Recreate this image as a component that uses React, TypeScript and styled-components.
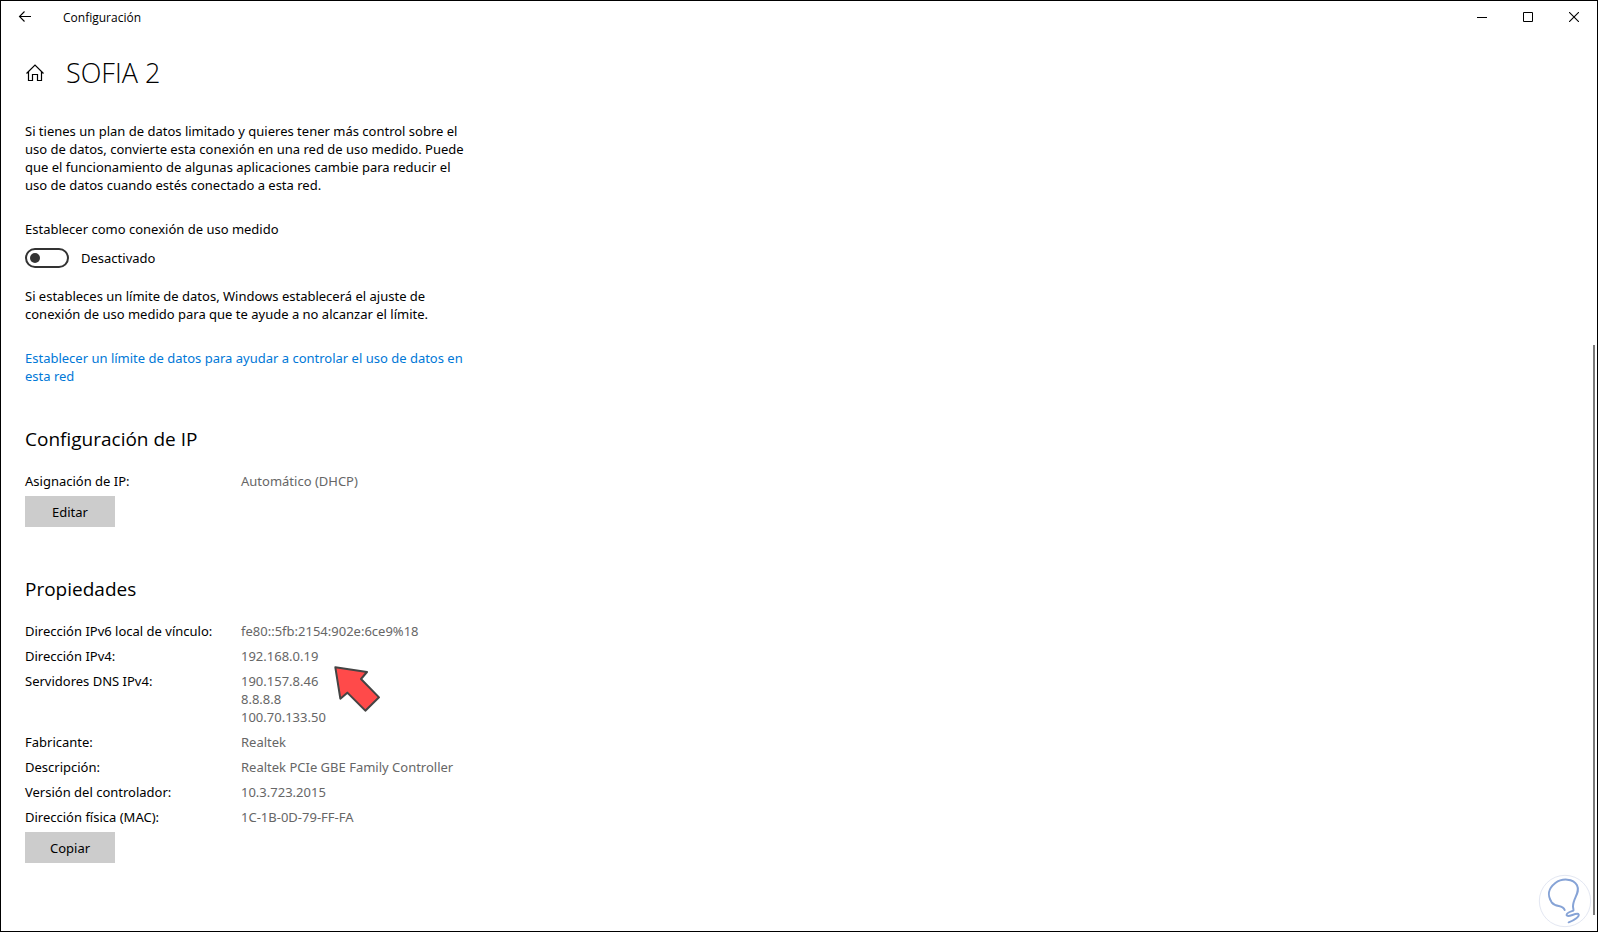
import React from 'react';
import styled, { createGlobalStyle } from 'styled-components';

const GlobalStyle = createGlobalStyle`
  * { box-sizing: border-box; }
  body {
    margin: 0;
    background: #fff;
    color: #000;
    font: 13px/18px "Segoe UI", "Noto Sans", "Open Sans", sans-serif;
  }
`;

const headingFont = '"Segoe UI", "Open Sans", "Noto Sans", sans-serif';

const Window = styled.div`
  position: relative;
  min-height: 100vh;
  border: 1px solid #000;
  background: #fff;
`;

const TitleBar = styled.header`
  display: flex;
  align-items: center;
  height: 32px;
  padding-left: 1px;
`;

const CaptionButton = styled.button`
  display: flex;
  align-items: center;
  justify-content: center;
  width: 46px;
  height: 32px;
  padding: 0;
  border: 0;
  background: transparent;
  color: #000;
`;

const AppName = styled.span`
  flex: 1;
  padding: 2px 0 0 15px;
  font-family: ${headingFont};
  font-size: 12px;
`;

const PageHeader = styled.div`
  display: flex;
  align-items: center;
  gap: 21px;
  height: 80px;
  padding-left: 24px;
`;

const HomeLink = styled.a`
  display: flex;
  color: #000;
`;

const PageTitle = styled.h1`
  margin: 0;
  font-family: ${headingFont};
  font-size: 27px;
  font-weight: 300;
  line-height: 36px;
`;

const Main = styled.main`
  max-width: 474px;
  padding: 9px 0 48px 24px;
`;

const Paragraph = styled.p<{ $gap?: number }>`
  margin: ${({ $gap = 0 }) => $gap}px 0 0;
`;

const SwitchLabel = styled.label`
  display: block;
  margin-top: 26px;
`;

const SwitchRow = styled.div`
  display: flex;
  align-items: center;
  gap: 12px;
  height: 20px;
  margin-top: 10px;
`;

const Switch = styled.input`
  appearance: none;
  display: flex;
  align-items: center;
  width: 44px;
  height: 20px;
  margin: 0;
  padding: 0 3px;
  border: 2px solid #333;
  border-radius: 10px;

  &::before {
    content: '';
    width: 10px;
    height: 10px;
    border-radius: 50%;
    background: #333;
  }

  &:checked {
    justify-content: flex-end;
  }
`;

const TextLink = styled.a`
  color: #0078d7;
  text-decoration: none;
`;

const Section = styled.section<{ $gap: number }>`
  margin-top: ${({ $gap }) => $gap}px;
`;

const SectionTitle = styled.h2`
  margin: 0 0 19px;
  font-family: ${headingFont};
  font-size: 19px;
  font-weight: 400;
  line-height: 28px;
`;

const Properties = styled.table`
  width: 100%;
  border-collapse: collapse;
  table-layout: fixed;

  tr:last-child > * {
    padding-bottom: 6px;
  }
`;

const Name = styled.th`
  width: 216px;
  padding: 0 0 7px;
  font-weight: 400;
  text-align: left;
  vertical-align: top;
  white-space: nowrap;
`;

const Value = styled.td`
  padding: 0 0 7px;
  color: #666;
  vertical-align: top;
`;

const ValueLine = styled.div`
  position: relative;
`;

const Pointer = styled.svg`
  position: absolute;
  left: 93px;
  top: 19px;
`;

const ActionButton = styled.button`
  display: block;
  width: 90px;
  height: 31px;
  padding: 0;
  border: 0;
  background: #ccc;
  color: #000;
  font: inherit;
`;

const ScrollThumb = styled.div`
  position: absolute;
  top: 37%;
  right: 2px;
  bottom: 16px;
  width: 2px;
  background: #7a7a7a;
`;

const Watermark = styled.svg`
  position: absolute;
  right: 5px;
  bottom: 3px;
`;

type Property = { name: string; values: string[]; marked?: boolean };

const ipSettings: Property[] = [{ name: 'Asignación de IP:', values: ['Automático (DHCP)'] }];

const properties: Property[] = [
  { name: 'Dirección IPv6 local de vínculo:', values: ['fe80::5fb:2154:902e:6ce9%18'] },
  { name: 'Dirección IPv4:', values: ['192.168.0.19'], marked: true },
  { name: 'Servidores DNS IPv4:', values: ['190.157.8.46', '8.8.8.8', '100.70.133.50'] },
  { name: 'Fabricante:', values: ['Realtek'] },
  { name: 'Descripción:', values: ['Realtek PCIe GBE Family Controller'] },
  { name: 'Versión del controlador:', values: ['10.3.723.2015'] },
  { name: 'Dirección física (MAC):', values: ['1C-1B-0D-79-FF-FA'] },
];

function RedArrow() {
  return (
    <Pointer width="47" height="47" viewBox="42 33 141 141" aria-hidden="true">
      <path
        d="M46 37 L141 51 L123 72 L177 127 L136 167 L82 113 L61 131 Z"
        fill="#ff4a4a"
        stroke="#444"
        strokeWidth="6"
        strokeLinejoin="round"
      />
    </Pointer>
  );
}

function PropertyTable({ rows }: { rows: Property[] }) {
  return (
    <Properties>
      <tbody>
        {rows.map((row) => (
          <tr key={row.name}>
            <Name scope="row">{row.name}</Name>
            <Value>
              {row.values.map((value) => (
                <ValueLine key={value}>
                  {value}
                  {row.marked && <RedArrow />}
                </ValueLine>
              ))}
            </Value>
          </tr>
        ))}
      </tbody>
    </Properties>
  );
}

export default function App() {
  return (
    <Window>
      <GlobalStyle />
      <TitleBar>
        <CaptionButton aria-label="Atrás">
          <svg width="14" height="12" viewBox="0 0 14 12" fill="none" stroke="currentColor" strokeWidth="1.1">
            <path d="M13 5.5H1.5M6.5 0.5L1.5 5.5L6.5 10.5" />
          </svg>
        </CaptionButton>
        <AppName>Configuración</AppName>
        <CaptionButton aria-label="Minimizar">
          <svg width="10" height="10" viewBox="0 0 10 10">
            <path d="M0 5.5H10" stroke="currentColor" />
          </svg>
        </CaptionButton>
        <CaptionButton aria-label="Maximizar">
          <svg width="10" height="10" viewBox="0 0 10 10">
            <path d="M0.5 0.5H9.5V9.5H0.5Z" fill="none" stroke="currentColor" />
          </svg>
        </CaptionButton>
        <CaptionButton aria-label="Cerrar">
          <svg width="10" height="10" viewBox="0 0 10 10">
            <path d="M0 0L10 10M10 0L0 10" stroke="currentColor" strokeWidth="1.1" />
          </svg>
        </CaptionButton>
      </TitleBar>

      <PageHeader>
        <HomeLink href="#" aria-label="Inicio">
          <svg width="20" height="18" viewBox="0 0 20 18" fill="none" stroke="currentColor" strokeWidth="1.2">
            <path d="M1.5 9.5L10 1L18.5 9.5M3.5 7.8V16.5H7.5V10.5H12.5V16.5H16.5V7.8" />
          </svg>
        </HomeLink>
        <PageTitle>SOFIA 2</PageTitle>
      </PageHeader>

      <Main>
        <Paragraph>
          Si tienes un plan de datos limitado y quieres tener más control sobre el uso de datos, convierte esta
          conexión en una red de uso medido. Puede que el funcionamiento de algunas aplicaciones cambie para reducir el
          uso de datos cuando estés conectado a esta red.
        </Paragraph>

        <SwitchLabel htmlFor="metered">Establecer como conexión de uso medido</SwitchLabel>
        <SwitchRow>
          <Switch id="metered" type="checkbox" role="switch" />
          <span>Desactivado</span>
        </SwitchRow>

        <Paragraph $gap={19}>
          Si estableces un límite de datos, Windows establecerá el ajuste de conexión de uso medido para que te ayude a
          no alcanzar el límite.
        </Paragraph>
        <Paragraph $gap={26}>
          <TextLink href="#">Establecer un límite de datos para ayudar a controlar el uso de datos en esta red</TextLink>
        </Paragraph>

        <Section $gap={40}>
          <SectionTitle>Configuración de IP</SectionTitle>
          <PropertyTable rows={ipSettings} />
          <ActionButton>Editar</ActionButton>
        </Section>

        <Section $gap={48}>
          <SectionTitle>Propiedades</SectionTitle>
          <PropertyTable rows={properties} />
          <ActionButton>Copiar</ActionButton>
        </Section>
      </Main>

      <ScrollThumb />
      <Watermark width="54" height="54" viewBox="0 0 162 162" aria-hidden="true">
        <circle cx="81" cy="81" r="77" fill="#fff" stroke="#e3e7f2" strokeWidth="3" />
        <path
          d="M80 108C74 90 54 102 41 85C28 64 28 46 52 27C72 12 106 13 117 34C128 56 105 72 105 97C105 104 108 108 106 110C98 113 84 116 86 124C90 132 112 116 121 120C128 126 108 140 92 145"
          fill="none"
          stroke="#86a3d6"
          strokeWidth="6"
          strokeLinecap="round"
        />
      </Watermark>
    </Window>
  );
}
